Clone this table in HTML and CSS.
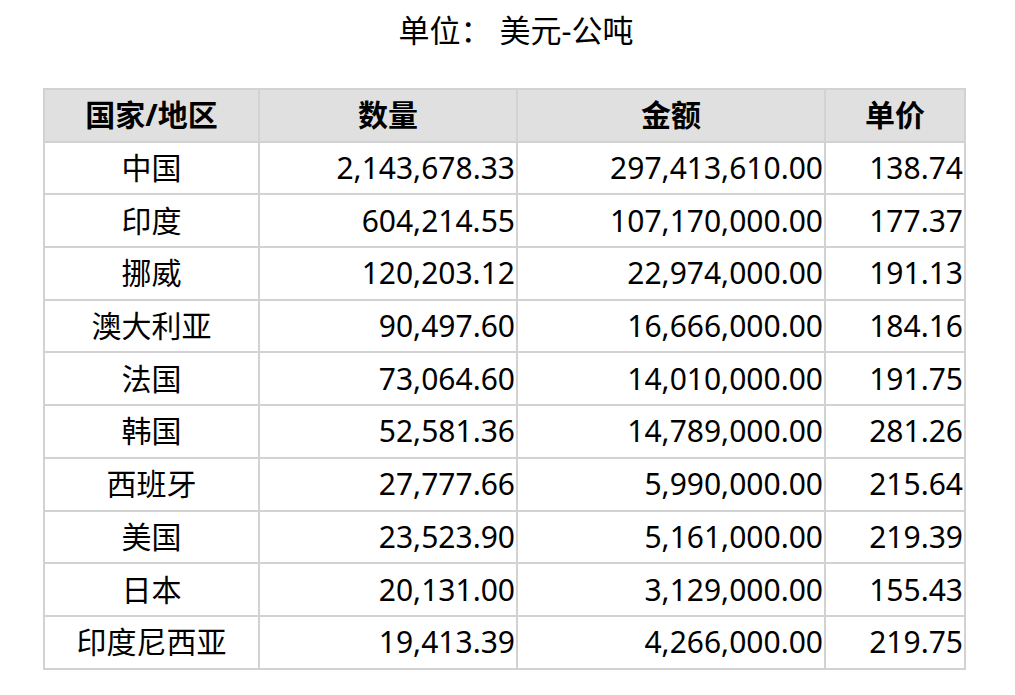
FILE: index.html
```html
<!DOCTYPE html>
<html lang="zh">
<head>
<meta charset="utf-8">
<link rel="stylesheet" href="styles.css">
</head>
<body>
<div class="page">
  <div class="title">单位： 美元-公吨</div>
  <table class="data">
    <colgroup>
      <col class="c1"><col class="c2"><col class="c3"><col class="c4">
    </colgroup>
    <thead>
      <tr><th>国家/地区</th><th>数量</th><th>金额</th><th>单价</th></tr>
    </thead>
    <tbody>
      <tr><td class="name">中国</td><td>2,143,678.33</td><td>297,413,610.00</td><td>138.74</td></tr>
      <tr><td class="name">印度</td><td>604,214.55</td><td>107,170,000.00</td><td>177.37</td></tr>
      <tr><td class="name">挪威</td><td>120,203.12</td><td>22,974,000.00</td><td>191.13</td></tr>
      <tr><td class="name">澳大利亚</td><td>90,497.60</td><td>16,666,000.00</td><td>184.16</td></tr>
      <tr><td class="name">法国</td><td>73,064.60</td><td>14,010,000.00</td><td>191.75</td></tr>
      <tr><td class="name">韩国</td><td>52,581.36</td><td>14,789,000.00</td><td>281.26</td></tr>
      <tr><td class="name">西班牙</td><td>27,777.66</td><td>5,990,000.00</td><td>215.64</td></tr>
      <tr><td class="name">美国</td><td>23,523.90</td><td>5,161,000.00</td><td>219.39</td></tr>
      <tr><td class="name">日本</td><td>20,131.00</td><td>3,129,000.00</td><td>155.43</td></tr>
      <tr><td class="name">印度尼西亚</td><td>19,413.39</td><td>4,266,000.00</td><td>219.75</td></tr>
    </tbody>
  </table>
</div>
</body>
</html>
```
FILE: styles.css
```css
html, body {
  margin: 0;
  padding: 0;
  background: #ffffff;
}
body {
  font-family: "Noto Sans", "Noto Sans CJK SC", sans-serif;
  color: #000000;
}
.page {
  padding: 0 0 0 43px;
}
.title {
  width: 946px;
  text-align: center;
  font-size: 31px;
  line-height: 40px;
  padding-top: 10px;
  height: 88px;
  box-sizing: border-box;
}
.data {
  border-collapse: collapse;
  table-layout: fixed;
  width: 921px;
  font-size: 30px;
}
.c1 { width: 215px; }
.c2 { width: 258px; }
.c3 { width: 308px; }
.c4 { width: 140px; }
.data th,
.data td {
  border: 2px solid #d2d2d2;
  height: 50.7px;
  padding: 0 1px 0 0;
  line-height: 32px;
  white-space: nowrap;
  overflow: hidden;
}
.data th {
  background: #e0e0e0;
  font-weight: bold;
  text-align: center;
  padding: 0;
}
.data td {
  text-align: right;
}
.data td.name {
  text-align: center;
  padding: 0;
}
```
